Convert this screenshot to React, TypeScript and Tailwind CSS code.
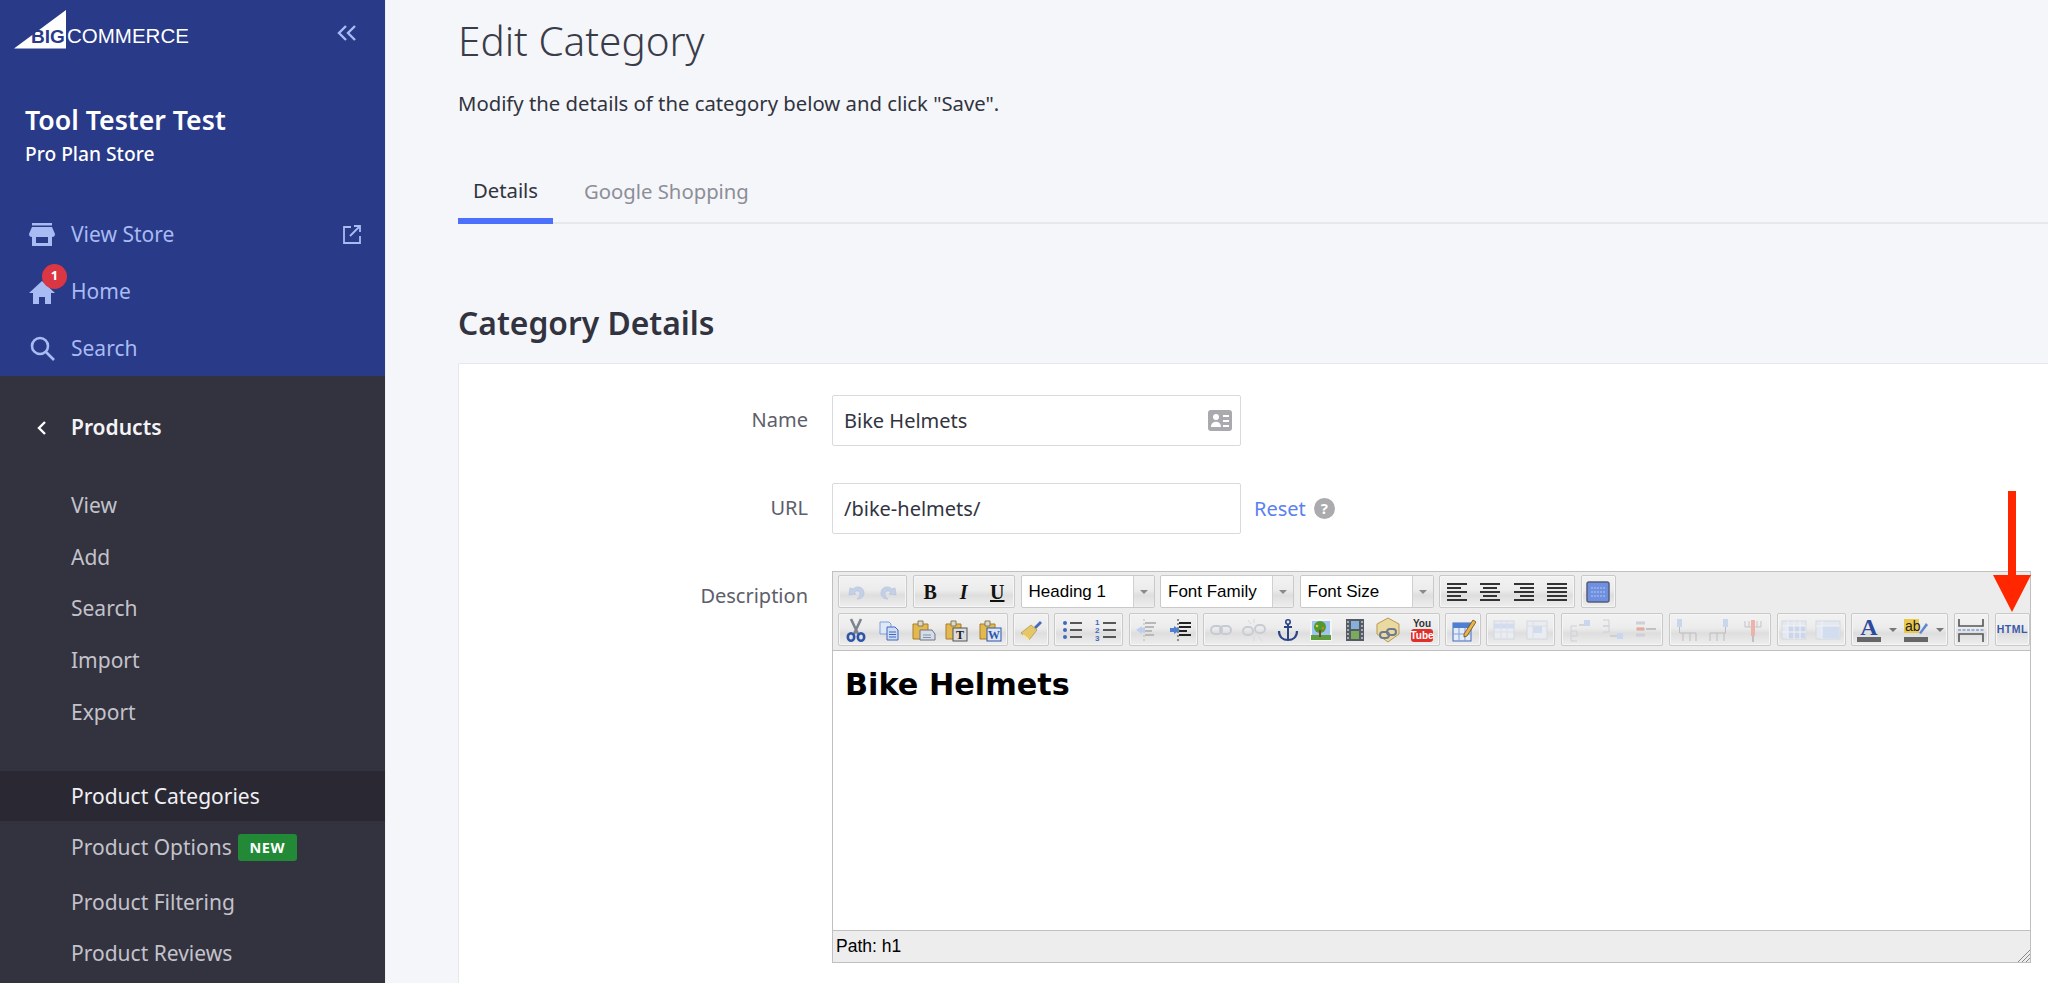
import { ReactNode } from 'react';

const sans = "font-['Noto_Sans',sans-serif]";

function Svg({ children, className = 'h-[26px] w-[26px]' }: { children: ReactNode; className?: string }) {
  return (
    <svg className={className} viewBox="0 0 26 26" fill="none" aria-hidden="true">
      {children}
    </svg>
  );
}

function Lines({ rows }: { rows: [number, number, number][] }) {
  return (
    <>
      {rows.map(([x1, x2, y]) => (
        <path key={`${x1}-${x2}-${y}`} d={`M${x1} ${y}H${x2}`} stroke="#333" strokeWidth="1.6" />
      ))}
    </>
  );
}

const UndoIcon = () => (
  <Svg>
    <path d="M7 9l-1 7 7-1-2-2c3-2 6-1 6 2 0 2-1 4-3 5 5 0 7-3 7-6 0-6-7-8-11-4z" fill="#c3d0e8" stroke="#aebfdc" strokeWidth=".6" />
  </Svg>
);
const RedoIcon = () => (
  <Svg>
    <path d="M19 9l1 7-7-1 2-2c-3-2-6-1-6 2 0 2 1 4 3 5-5 0-7-3-7-6 0-6 7-8 11-4z" fill="#c3d0e8" stroke="#aebfdc" strokeWidth=".6" />
  </Svg>
);
const CutIcon = () => (
  <Svg>
    <path d="M8 2l7 15M18 2L11 17" stroke="#7f838d" strokeWidth="2.600" />
    <ellipse cx="8" cy="20" rx="3.200" ry="3.800" stroke="#2f55a8" strokeWidth="2.600" />
    <ellipse cx="18" cy="20" rx="3.200" ry="3.800" stroke="#2f55a8" strokeWidth="2.600" />
  </Svg>
);
const CopyIcon = () => (
  <Svg>
    <path d="M4 5h9l2 2v10H4z" fill="#dfe8f8" stroke="#7f9fd8" />
    <path d="M11 10h8l3 3v10H11z" fill="#cfdcf5" stroke="#3f69bd" />
    <path d="M13 15h7M13 17.500h7M13 20h7" stroke="#3f69bd" />
  </Svg>
);
const Clipboard = () => (
  <>
    <path d="M3 7h15v15H3z" fill="#e2b84f" stroke="#a77f2a" />
    <path d="M8 4h5v5H8z" fill="#d9d9d9" stroke="#8a7a45" />
  </>
);
const PasteIcon = () => (
  <Svg>
    <Clipboard />
    <path d="M10 13h12l3 4v6H10z" fill="#d5dde8" stroke="#6f7480" />
    <path d="M13 18h8M13 20.500h8" stroke="#8291ad" />
  </Svg>
);
const PasteTextIcon = () => (
  <Svg>
    <Clipboard />
    <rect x="10" y="11" width="14" height="13" fill="#dcdcdc" stroke="#555" />
    <text x="17" y="22" textAnchor="middle" fontFamily="Liberation Serif, serif" fontWeight="700" fontSize="12" fill="#222">T</text>
  </Svg>
);
const PasteWordIcon = () => (
  <Svg>
    <Clipboard />
    <rect x="10" y="11" width="14" height="13" fill="#dbe5f8" stroke="#2f55a8" />
    <text x="17" y="22" textAnchor="middle" fontFamily="Liberation Serif, serif" fontWeight="700" fontSize="12" fill="#2f55a8">W</text>
  </Svg>
);
const CleanIcon = () => (
  <Svg>
    <path d="M16 10l6-6 2 2-6 6z" fill="#4a6cb8" />
    <path d="M3 16l10-8 6 5-8 10z" fill="#e6c768" stroke="#a98f45" strokeWidth=".7" />
    <path d="M5 18l6 5" stroke="#f4e6ae" strokeWidth="2" />
  </Svg>
);
const BulletIcon = () => (
  <Svg>
    <circle cx="6" cy="6" r="2" fill="#3f69bd" />
    <circle cx="6" cy="13" r="2" fill="#3f69bd" />
    <circle cx="6" cy="20" r="2" fill="#3f69bd" />
    <Lines rows={[[11, 23, 6], [11, 23, 13], [11, 23, 20]]} />
  </Svg>
);
const NumberIcon = () => (
  <Svg>
    <g fontFamily="Liberation Sans, sans-serif" fontWeight="700" fontSize="8" fill="#3f69bd">
      <text x="3" y="8">1</text>
      <text x="3" y="16">2</text>
      <text x="3" y="24">3</text>
    </g>
    <Lines rows={[[11, 24, 6], [11, 24, 13], [11, 24, 20]]} />
  </Svg>
);
const OutdentIcon = () => (
  <Svg>
    <path d="M11 2v22" stroke="#bbb" strokeDasharray="2 2" />
    <path d="M12 6h11M12 10h9M12 14h7M12 18h9" stroke="#b8b8b8" strokeWidth="1.8" />
    <path d="M9 9l-6 4 6 4v-2h3v-4H9z" fill="#bcd0ee" />
  </Svg>
);
const IndentIcon = () => (
  <Svg>
    <path d="M11 2v22" stroke="#333" strokeDasharray="2 2" />
    <path d="M12 6h12M12 10h12M12 14h8M12 18h12" stroke="#222" strokeWidth="1.8" />
    <path d="M7 9l6 4-6 4v-2H3v-4h4z" fill="#4f7fd0" />
  </Svg>
);
const LinkIcon = () => (
  <Svg>
    <rect x="3" y="9" width="11" height="8" rx="4" stroke="#c6cad4" strokeWidth="2" />
    <rect x="12" y="9" width="11" height="8" rx="4" stroke="#c6cad4" strokeWidth="2" />
  </Svg>
);
const UnlinkIcon = () => (
  <Svg>
    <rect x="2" y="10" width="10" height="8" rx="4" stroke="#c9ccd4" strokeWidth="2" />
    <rect x="14" y="8" width="10" height="8" rx="4" stroke="#c9ccd4" strokeWidth="2" />
    <path d="M7 3l3 4M18 20l3 4M13 2v4M13 19v5" stroke="#d6d8dd" />
  </Svg>
);
const AnchorIcon = () => (
  <Svg>
    <circle cx="13" cy="5" r="2.200" stroke="#2b4484" strokeWidth="1.600" />
    <path d="M13 7v16M9 10h8" stroke="#2b4484" strokeWidth="2" />
    <path d="M4 14c0 6 4 9 9 9s9-3 9-9" stroke="#2b4484" strokeWidth="2.200" />
  </Svg>
);
const ImageIcon = () => (
  <Svg>
    <rect x="2" y="2" width="22" height="22" fill="#f5f5f5" />
    <rect x="4" y="4" width="18" height="14" fill="#9fc4f0" />
    <path d="M3 18h20v5H3z" fill="#5f9c3c" />
    <circle cx="12" cy="10" r="6" fill="#4e9a2e" />
    <circle cx="9" cy="9" r="1.300" fill="#e8c43f" />
    <circle cx="15" cy="11" r="1.300" fill="#d9792e" />
    <path d="M12 13v7" stroke="#704a22" strokeWidth="2" />
  </Svg>
);
const FilmIcon = () => (
  <Svg>
    <rect x="4" y="2" width="18" height="22" fill="#555b63" />
    <path d="M6 4v18M20 4v18" stroke="#a9adb3" strokeWidth="2" strokeDasharray="2 2" />
    <rect x="9" y="4" width="8" height="8" fill="#87b0d8" />
    <rect x="9" y="14" width="8" height="8" fill="#7aaa5c" />
  </Svg>
);
const EmbedIcon = () => (
  <Svg>
    <path d="M13 1l11 6v10l-11 8-11-8V7z" fill="#ead9a0" stroke="#b89a4c" />
    <rect x="5" y="15" width="9" height="6" rx="3" stroke="#6f7a8f" strokeWidth="2" />
    <rect x="12" y="12" width="9" height="6" rx="3" stroke="#6f7a8f" strokeWidth="2" />
  </Svg>
);
const YoutubeIcon = () => (
  <Svg>
    <text x="13" y="10" textAnchor="middle" fontFamily="Liberation Sans, sans-serif" fontWeight="700" fontSize="10" fill="#333">You</text>
    <rect x="2" y="12" width="22" height="13" rx="3" fill="#e0302c" />
    <text x="13" y="22" textAnchor="middle" fontFamily="Liberation Sans, sans-serif" fontWeight="700" fontSize="10" fill="#fff">Tube</text>
  </Svg>
);
const EditIcon = () => (
  <Svg>
    <rect x="3" y="6" width="18" height="18" fill="#e4ecfa" stroke="#3f69bd" />
    <path d="M3 6h18v5H3z" fill="#4f7fd0" />
    <path d="M9 11v13M15 11v13M3 17h18" stroke="#7f9fd8" />
    <path d="M14 17L23 3l3 2-9 14-3 1z" fill="#e9b24a" stroke="#6b4a12" strokeWidth=".8" />
  </Svg>
);
const RowAIcon = () => (
  <Svg>
    <rect x="3" y="4" width="20" height="18" fill="#e9ecf1" stroke="#d4d8de" />
    <path d="M3 9h20" stroke="#d2dcee" strokeWidth="5" />
    <path d="M3 15h20M10 4v18M16 4v18" stroke="#dcdfe4" />
  </Svg>
);
const RowBIcon = () => (
  <Svg>
    <rect x="3" y="4" width="20" height="18" fill="#e9ecf1" stroke="#d4d8de" />
    <rect x="9" y="9" width="9" height="7" fill="#d2dcee" />
    <path d="M3 9h20M9 4v18" stroke="#dcdfe4" />
  </Svg>
);
const SplitAIcon = () => (
  <Svg>
    <path d="M6 14h6v5H6zM6 19v5h6M6 14V9h6" stroke="#cdd0d6" />
    <path d="M14 8h8" stroke="#bbb" />
    <rect x="19" y="3" width="6" height="6" fill="#c8d6ee" />
  </Svg>
);
const SplitBIcon = () => (
  <Svg>
    <path d="M4 3h6v6H4M4 9h6v6H4" stroke="#cdd0d6" />
    <path d="M11 19h8" stroke="#bbb" />
    <rect x="18" y="16" width="6" height="6" fill="#c8d6ee" />
  </Svg>
);
const SplitCIcon = () => (
  <Svg>
    <path d="M4 6h9M4 12h9M4 18h9" stroke="#cdd0d6" strokeWidth="3" />
    <path d="M5 12h7" stroke="#e9a99b" strokeWidth="3" />
    <path d="M14 12h10" stroke="#999" />
  </Svg>
);
const ColLeftIcon = () => (
  <Svg>
    <rect x="4" y="2" width="5" height="8" fill="#c8d6ee" />
    <path d="M6.500 10v6M7 16H23M10 16v8M17 16v8M23 16v8" stroke="#bdbdbd" />
  </Svg>
);
const ColRightIcon = () => (
  <Svg>
    <rect x="16" y="2" width="5" height="8" fill="#c8d6ee" />
    <path d="M18.500 10v6M3 16H19M3 16v8M10 16v8M17 16v8" stroke="#bdbdbd" />
  </Svg>
);
const ColDelIcon = () => (
  <Svg>
    <path d="M5 4v6H21V4M9 4v6M17 4v6" stroke="#c4c4c4" />
    <rect x="11" y="3" width="4" height="16" fill="#eeb3a8" />
    <path d="M13 19v6" stroke="#999" />
  </Svg>
);
const GridAIcon = () => (
  <Svg>
    <rect x="1" y="4" width="24" height="18" fill="#e4e8f1" stroke="#d4d8de" />
    <rect x="7" y="9" width="17" height="12" fill="#ccd6ea" />
    <path d="M7 4v18M13 4v18M19 4v18M1 9h24M1 15h24" stroke="#f2f2f2" />
  </Svg>
);
const GridBIcon = () => (
  <Svg>
    <rect x="1" y="4" width="24" height="18" fill="#e4e8f1" stroke="#d4d8de" />
    <rect x="7" y="9" width="17" height="12" fill="#d3ddf0" />
    <path d="M1 9h24M7 4v18" stroke="#f2f2f2" />
  </Svg>
);
const PageBreakIcon = () => (
  <Svg>
    <path d="M1 2v7h24V2M1 25v-8h24v8" stroke="#555" strokeWidth="1.600" />
    <path d="M0 13h26" stroke="#7f9fd8" strokeWidth="1.300" strokeDasharray="3 1.500" />
  </Svg>
);

function Btn({ children }: { children: ReactNode }) {
  return <div className="flex h-full w-[33.5px] shrink-0 items-center justify-center">{children}</div>;
}

function Group({ children }: { children: ReactNode }) {
  return (
    <div className="flex h-[33px] shrink-0 items-center rounded-[2px] border border-[#c9c9c9] bg-[linear-gradient(180deg,#f2f2f2_0%,#ececec_45%,#dedede_62%,#eeeeee_100%)] shadow-[inset_0_0_0_1px_#f6f6f6]">
      {children}
    </div>
  );
}

function Select({ label }: { label: string }) {
  return (
    <div className="flex h-[33px] w-[134px] shrink-0 rounded-[2px] border border-[#c9c9c9] bg-white">
      <div className="flex flex-1 items-center pl-[7px] font-['Liberation_Sans',sans-serif] text-[17px] text-black">{label}</div>
      <div className="flex w-[21px] items-center justify-center border-l border-[#d0d0d0] bg-[linear-gradient(180deg,#f2f2f2_0%,#ececec_45%,#dedede_62%,#eeeeee_100%)]">
        <span className="h-0 w-0 border-x-[4px] border-t-[4px] border-x-transparent border-t-[#8a8a8a]" />
      </div>
    </div>
  );
}

function FormatLetter({ className, children }: { className: string; children: string }) {
  return <span className={`font-['Liberation_Serif',serif] text-[20px] leading-none font-bold text-[#111] ${className}`}>{children}</span>;
}

function AlignIcon({ d }: { d: string }) {
  return (
    <Svg>
      <path d={d} stroke="#333" strokeWidth="1.900" />
    </Svg>
  );
}

function Toolbar() {
  return (
    <div className="flex flex-col gap-[5px] border-b border-[#c0c0c0] bg-[#ececec] pt-[3px] pb-[4px] pl-[5px]">
      <div className="flex gap-[5.5px]">
        <Group>
          <Btn><UndoIcon /></Btn>
          <Btn><RedoIcon /></Btn>
        </Group>
        <Group>
          <Btn><FormatLetter className="">B</FormatLetter></Btn>
          <Btn><FormatLetter className="italic">I</FormatLetter></Btn>
          <Btn><FormatLetter className="underline">U</FormatLetter></Btn>
        </Group>
        <Select label="Heading 1" />
        <Select label="Font Family" />
        <Select label="Font Size" />
        <Group>
          <Btn><AlignIcon d="M3 5h20M3 9h14M3 13h20M3 17h14M3 21h20" /></Btn>
          <Btn><AlignIcon d="M3 5h20M6 9h14M3 13h20M6 17h14M3 21h20" /></Btn>
          <Btn><AlignIcon d="M3 5h20M9 9h14M3 13h20M9 17h14M3 21h20" /></Btn>
          <Btn><AlignIcon d="M3 5h20M3 9h20M3 13h20M3 17h20M3 21h20" /></Btn>
        </Group>
        <Group>
          <Btn>
            <Svg>
              <rect x="2" y="3" width="22" height="20" rx="2" fill="#6f8fe0" stroke="#555e78" strokeWidth="1.500" />
              <path d="M6 9h14M6 13h14M6 17h14" stroke="#b4c6f2" strokeDasharray="2 1" />
            </Svg>
          </Btn>
        </Group>
      </div>
      <div className="flex gap-[5.5px]">
        <Group>
          <Btn><CutIcon /></Btn>
          <Btn><CopyIcon /></Btn>
          <Btn><PasteIcon /></Btn>
          <Btn><PasteTextIcon /></Btn>
          <Btn><PasteWordIcon /></Btn>
        </Group>
        <Group>
          <Btn><CleanIcon /></Btn>
        </Group>
        <Group>
          <Btn><BulletIcon /></Btn>
          <Btn><NumberIcon /></Btn>
        </Group>
        <Group>
          <Btn><OutdentIcon /></Btn>
          <Btn><IndentIcon /></Btn>
        </Group>
        <Group>
          <Btn><LinkIcon /></Btn>
          <Btn><UnlinkIcon /></Btn>
          <Btn><AnchorIcon /></Btn>
          <Btn><ImageIcon /></Btn>
          <Btn><FilmIcon /></Btn>
          <Btn><EmbedIcon /></Btn>
          <Btn><YoutubeIcon /></Btn>
        </Group>
        <Group>
          <Btn><EditIcon /></Btn>
        </Group>
        <Group>
          <Btn><RowAIcon /></Btn>
          <Btn><RowBIcon /></Btn>
        </Group>
        <Group>
          <Btn><SplitAIcon /></Btn>
          <Btn><SplitBIcon /></Btn>
          <Btn><SplitCIcon /></Btn>
        </Group>
        <Group>
          <Btn><ColLeftIcon /></Btn>
          <Btn><ColRightIcon /></Btn>
          <Btn><ColDelIcon /></Btn>
        </Group>
        <Group>
          <Btn><GridAIcon /></Btn>
          <Btn><GridBIcon /></Btn>
        </Group>
        <Group>
          <Btn>
            <Svg>
              <text x="13" y="18" textAnchor="middle" fontFamily="Liberation Serif, serif" fontWeight="700" fontSize="24" fill="#2b4aa0">A</text>
              <rect x="1" y="20" width="24" height="5" fill="#666" />
            </Svg>
          </Btn>
          <div className="flex w-[14px] justify-center">
            <span className="h-0 w-0 border-x-[4px] border-t-[4px] border-x-transparent border-t-[#777]" />
          </div>
          <Btn>
            <Svg>
              <rect x="1" y="2" width="15" height="14" fill="#e8c94a" />
              <text x="2" y="14" fontFamily="Liberation Sans, sans-serif" fontSize="14" fill="#222">ab</text>
              <path d="M16 16l7-10 2 2-7 9z" fill="#5f87d0" />
              <rect x="1" y="20" width="24" height="5" fill="#666" />
            </Svg>
          </Btn>
          <div className="flex w-[14px] justify-center">
            <span className="h-0 w-0 border-x-[4px] border-t-[4px] border-x-transparent border-t-[#777]" />
          </div>
        </Group>
        <Group>
          <Btn><PageBreakIcon /></Btn>
        </Group>
        <Group>
          <Btn>
            <span className="font-['Liberation_Sans',sans-serif] text-[10.500px] font-bold tracking-[0.5px] text-[#3c59a8]">HTML</span>
          </Btn>
        </Group>
      </div>
    </div>
  );
}

function Editor() {
  return (
    <div className="relative flex h-[392px] w-[1199px] flex-col border border-[#c0c0c0]">
      <Toolbar />
      <div className="flex-1 bg-white pt-[15px] pl-[12px]">
        <h1 className="font-['DejaVu_Sans',sans-serif] text-[30.300px] leading-[38px] font-bold text-black">Bike Helmets</h1>
      </div>
      <div className="relative flex h-[32px] items-center border-t border-[#c0c0c0] bg-[#ededed] pl-[3px] font-['Liberation_Sans',sans-serif] text-[17.500px] text-black">
        Path: h1
        <svg className="absolute right-0 bottom-0 h-[14px] w-[14px]" viewBox="0 0 14 14" aria-hidden="true">
          <path d="M14 2L2 14M14 6l-8 8M14 10l-4 4" stroke="#888" />
        </svg>
      </div>
      {/* red annotation arrow pointing at the HTML button */}
      <svg className="absolute top-[-81px] right-[-1px] h-[122px] w-[38px]" viewBox="0 0 38 122" aria-hidden="true">
        <path d="M15 0h8v84h15L19 121 0 84h15z" fill="#ff2600" />
      </svg>
    </div>
  );
}

function Field({ label, children }: { label: string; children: ReactNode }) {
  return (
    <div className="flex gap-[24px]">
      <div className="w-[349px] shrink-0 pt-[12px] text-right text-[20px] leading-[26px] text-[#5d5e6a]">{label}</div>
      {children}
    </div>
  );
}

function TextBox({ value, children }: { value: string; children?: ReactNode }) {
  return (
    <div className="flex h-[51px] w-[409px] items-center justify-between rounded-[2px] border border-[#d9dade] bg-white pr-[8px] pl-[11px] text-[20px] text-[#313440]">
      <span>{value}</span>
      {children}
    </div>
  );
}

function NavItem({ icon, label }: { icon: ReactNode; label: string }) {
  return (
    <div className="flex h-[57px] items-center pl-[29px] text-[21px] text-[#a9bbf3]">
      <div className="relative mr-[16px] flex w-[26px] justify-center">{icon}</div>
      <span>{label}</span>
    </div>
  );
}

function SubItem({ label, active }: { label: string; active?: boolean }) {
  return (
    <div className={`flex items-center pl-[71px] text-[21px] ${active ? 'h-[50px] bg-[#2a2833] text-[#f0f0f4]' : 'h-[51.700px] text-[#c3c3cb]'}`}>
      {label}
    </div>
  );
}

function Sidebar() {
  return (
    <div className="flex h-full w-[385px] shrink-0 flex-col">
      <div className="h-[376px] bg-[#283a88]">
        <div className="flex items-start justify-between pt-[10px] pr-[28px] pl-[14px]">
          <svg className="h-[40px] w-[176px]" viewBox="0 0 176 40" aria-hidden="true">
            <path d="M0 38.500L52 0v38.500z" fill="#fff" />
            <text x="17" y="33" fontFamily="Liberation Sans, sans-serif" fontWeight="700" fontSize="19" fill="#283a88">BIG</text>
            <text x="53" y="33" fontFamily="Liberation Sans, sans-serif" fontSize="20.500" fill="#fff">COMMERCE</text>
          </svg>
          <svg className="mt-[14px] h-[18px] w-[20px]" viewBox="0 0 20 18" fill="none" aria-hidden="true">
            <path d="M9 2L2 9l7 7M18 2l-7 7 7 7" stroke="#a9bbf3" strokeWidth="2.400" />
          </svg>
        </div>
        <div className="mt-[53px] pl-[25px] text-white">
          <div className="text-[26.700px] leading-[34px] font-semibold">Tool Tester Test</div>
          <div className="mt-[4px] text-[19.200px] leading-[26px] font-medium">Pro Plan Store</div>
        </div>
        <div className="mt-[39px]">
          <div className="relative">
            <NavItem
              label="View Store"
              icon={
                <svg className="h-[24px] w-[26px]" viewBox="0 0 26 24" fill="#a9bbf3" aria-hidden="true">
                  <path d="M3 0h20v2.500H3zM3 4h20l3 7c0 2-1 3-3 3v9H3v-9c-2 0-3-1-3-3z" />
                  <rect x="7" y="14" width="12" height="6" fill="#283a88" />
                </svg>
              }
            />
            <svg className="absolute top-[19px] right-[24px] h-[19px] w-[18px]" viewBox="0 0 18 19" fill="none" stroke="#a9bbf3" strokeWidth="1.800" aria-hidden="true">
              <path d="M8 2H1v16h16v-7M11 1h6v6M17 1L7 11" />
            </svg>
          </div>
          <NavItem
            label="Home"
            icon={
              <>
                <svg className="h-[24px] w-[26px]" viewBox="0 0 26 24" fill="#a9bbf3" aria-hidden="true">
                  <path d="M13 1L0 13h4v11h6v-7h6v7h6V13h4z" />
                </svg>
                <span className="absolute top-[-16px] left-[13px] flex h-[25px] w-[25px] items-center justify-center rounded-full bg-[#db3643] text-[13px] font-bold text-white">1</span>
              </>
            }
          />
          <NavItem
            label="Search"
            icon={
              <svg className="h-[25px] w-[25px]" viewBox="0 0 25 25" fill="none" stroke="#a9bbf3" strokeWidth="2.600" aria-hidden="true">
                <circle cx="10" cy="10" r="8" />
                <path d="M16 16l8 8" />
              </svg>
            }
          />
        </div>
      </div>
      <div className="flex-1 overflow-hidden bg-[#33323f]">
        <div className="flex h-[104px] items-center pl-[37px] text-[21px] font-semibold text-[#f4f4f6]">
          <svg className="mr-[25px] h-[14px] w-[9px]" viewBox="0 0 9 14" fill="none" stroke="#fff" strokeWidth="2.400" aria-hidden="true">
            <path d="M8 1L2 7l6 6" />
          </svg>
          Products
        </div>
        <SubItem label="View" />
        <SubItem label="Add" />
        <SubItem label="Search" />
        <SubItem label="Import" />
        <SubItem label="Export" />
        <div className="h-[33px]" />
        <SubItem label="Product Categories" active />
        <div className="flex h-[52px] items-center pl-[71px] text-[21px] text-[#c3c3cb]">
          Product Options
          <span className="ml-[6px] flex h-[27px] w-[59px] items-center justify-center rounded-[3px] bg-[#228a36] text-[14.500px] font-bold tracking-[0.5px] text-white">NEW</span>
        </div>
        <div className="h-[3px]" />
        <SubItem label="Product Filtering" />
        <SubItem label="Product Reviews" />
      </div>
    </div>
  );
}

export default function App() {
  return (
    <div className={`flex h-[983px] w-[2048px] overflow-hidden bg-[#f5f6f9] ${sans}`}>
      <Sidebar />
      <main className="min-w-0 flex-1 border-l border-[#eceef2] pl-[72px] text-[#313440]">
        <h1 className="pt-[13px] text-[40.500px] leading-[56px] font-light text-[#3a3c4a]">Edit Category</h1>
        <p className="mt-[21px] text-[20.300px] leading-[26px]">Modify the details of the category below and click &quot;Save&quot;.</p>
        <div className="mt-[50px] flex h-[58px] border-b-2 border-[#e6e8ee]">
          <div className="flex h-[58px] w-[95px] items-center justify-center border-b-[6px] border-[#4b71fc] pb-[3px] text-[20.300px] text-[#313440]">Details</div>
          <div className="ml-[31px] flex items-center pb-[6px] text-[20.300px] text-[#8c8e98]">Google Shopping</div>
        </div>
        <h2 className="mt-[78px] text-[31.800px] leading-[42px] font-semibold text-[#313440]">Category Details</h2>
        <div className="mt-[19px] flex flex-col rounded-tl-[2px] border border-r-0 border-[#e6e8ec] bg-white pt-[31px] pb-[60px]">
          <Field label="Name">
            <TextBox value="Bike Helmets">
              <svg className="h-[21px] w-[24px]" viewBox="0 0 24 21" aria-hidden="true">
                <rect width="24" height="21" rx="3" fill="#a9a9ae" />
                <circle cx="8" cy="7" r="3" fill="#fff" />
                <path d="M3 17c0-7 10-7 10 0zM15 5h6v2h-6zM15 10h6v2h-6zM15 15h6v2h-6z" fill="#fff" />
              </svg>
            </TextBox>
          </Field>
          <div className="mt-[37px] flex items-center">
            <Field label="URL">
              <TextBox value="/bike-helmets/" />
            </Field>
            <a className="ml-[13px] text-[20px] text-[#5b7ff0]">Reset</a>
            <span className="ml-[8px] flex h-[21px] w-[21px] items-center justify-center rounded-full bg-[#aaaaaf] text-[15px] font-bold text-white">?</span>
          </div>
          <div className="mt-[37px]">
            <Field label="Description">
              <Editor />
            </Field>
          </div>
        </div>
      </main>
    </div>
  );
}
